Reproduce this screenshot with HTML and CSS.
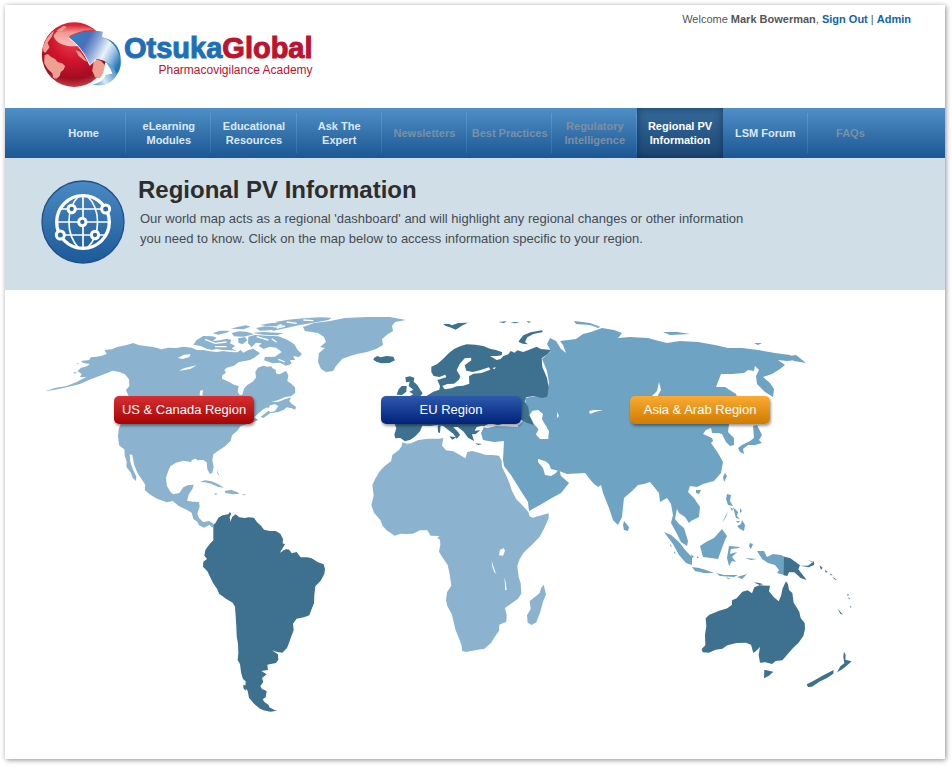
FILE: index.html
```
<!DOCTYPE html>
<html lang="en">
<head>
<meta charset="utf-8">
<title>Regional PV Information</title>
<link rel="stylesheet" href="styles.css">
</head>
<body>
<div class="page">
  <header class="header">
    <a class="brand" href="#">
      <svg class="brand-mark" viewBox="120 60 248 210" aria-hidden="true">
        <defs>
          <radialGradient id="ball" cx="0.48" cy="0.25" r="0.78">
            <stop offset="0" stop-color="#ed4050"/><stop offset="0.45" stop-color="#cf142d"/><stop offset="0.8" stop-color="#a10d22"/><stop offset="1" stop-color="#cb4a52"/>
          </radialGradient>
          <linearGradient id="gloss" x1="0" y1="0" x2="0" y2="1">
            <stop offset="0" stop-color="#d92636"/><stop offset="0.35" stop-color="#f29a92"/><stop offset="1" stop-color="#fbd8cd" stop-opacity="0.85"/>
          </linearGradient>
          <linearGradient id="arrow" x1="215" y1="100" x2="362" y2="180" gradientUnits="userSpaceOnUse">
            <stop offset="0" stop-color="#2b86c6"/><stop offset="0.3" stop-color="#4a70b8"/><stop offset="0.48" stop-color="#8ba9d8"/><stop offset="0.68" stop-color="#eaf2fb"/><stop offset="0.82" stop-color="#9cc3e5"/><stop offset="1" stop-color="#2478bc"/>
          </linearGradient>
          <linearGradient id="tail" x1="270" y1="240" x2="362" y2="190" gradientUnits="userSpaceOnUse">
            <stop offset="0" stop-color="#4b94cb"/><stop offset="0.35" stop-color="#d4e7f6"/><stop offset="0.65" stop-color="#6ea9d8"/><stop offset="1" stop-color="#2176ba"/>
          </linearGradient>
        </defs>
        <path fill="url(#tail)" d="M300 112C345 116 366 150 361 192C356 235 322 266 276 253C300 249 314 236 316 224L336 221C330 200 318 186 300 178Z"/>
        <circle cx="222" cy="164" r="97" fill="url(#ball)"/>
        <path fill="url(#gloss)" d="M160 108C172 76 250 62 285 92C262 88 235 94 207 108C214 122 224 130 236 138C205 142 168 134 160 108Z"/>
        <g fill="#eea091">
          <path d="M133 166L143 162L152 170L166 178L172 186L186 190L195 198L190 209L182 216L178 229L168 236L160 234L156 220L142 206L132 190Z"/>
          <path d="M282 176L302 182L315 196L312 212L300 236L285 232L276 212Z"/>
          <path d="M128 140L138 118L154 98L162 92L155 110L142 128L148 142L136 158L130 155ZM168 92L190 78L200 80L184 94Z"/>
          <path d="M226 150L240 156L252 172L262 186L250 180L236 168Z"/>
        </g>
        <path fill="none" stroke="#fff" stroke-width="5" d="M318 190C318 222 302 243 272 253"/>
        <path fill="url(#arrow)" d="M206 113C240 93 275 89 308 95L306 111C340 121 365 160 361 198C359 208 355 216 350 222C340 196 318 180 288 177L269 195C253 157 232 132 206 113Z"/>
        <path fill="none" stroke="#fff" stroke-width="3" d="M206 114C234 134 253 159 269 196L288 178"/>
        <path fill="#fff" d="M316 188L321 208L338 220L308 226Z"/>
      </svg>
      <span class="brand-text">
        <span class="brand-name"><span class="brand-first">Otsuka</span><span class="brand-second">Global</span></span>
        <span class="brand-sub">Pharmacovigilance Academy</span>
      </span>
    </a>
    <p class="account">Welcome <strong>Mark Bowerman</strong>, <a href="#">Sign Out</a> | <a href="#">Admin</a></p>
  </header>

  <nav class="nav" aria-label="Main">
    <a href="#">Home</a>
    <a href="#">eLearning<br>Modules</a>
    <a href="#">Educational<br>Resources</a>
    <a href="#">Ask The<br>Expert</a>
    <a class="muted" href="#">Newsletters</a>
    <a class="muted" href="#">Best Practices</a>
    <a class="muted" href="#">Regulatory<br>Intelligence</a>
    <a class="current" href="#" aria-current="page">Regional PV<br>Information</a>
    <a href="#">LSM Forum</a>
    <a class="muted" href="#">FAQs</a>
  </nav>

  <section class="intro">
    <svg class="intro-icon" viewBox="123 241 252 252" aria-hidden="true">
      <defs>
        <linearGradient id="disc" x1="0" y1="0" x2="0" y2="1">
          <stop offset="0" stop-color="#4a8ac4"/><stop offset="1" stop-color="#1d5a98"/>
        </linearGradient>
      </defs>
      <circle cx="249" cy="367" r="123" fill="url(#disc)" stroke="#204f8b" stroke-width="4"/>
      <g fill="none" stroke="#fff">
        <circle cx="249" cy="367" r="79" stroke-width="10"/>
        <path stroke-width="5" d="M249 287V447M169 367H329M181 328H317M181 406H317M236 289C197 330 197 404 236 445M262 289C303 330 303 404 262 445"/>
      </g>
      <g fill="#2c69a7" stroke="#fff" stroke-width="9">
        <circle cx="215" cy="328" r="11"/><circle cx="317" cy="328" r="12"/><circle cx="247" cy="367" r="11"/><circle cx="181" cy="406" r="12"/><circle cx="285" cy="406" r="11"/>
      </g>
    </svg>
    <div class="intro-text">
      <h1>Regional PV Information</h1>
      <p>Our world map acts as a regional 'dashboard' and will highlight any regional changes or other information you need to know. Click on the map below to access information specific to your region.</p>
    </div>
  </section>

  <main class="map">
    <svg class="world" viewBox="5 290 940 469" role="img" aria-label="World map">
      <!-- North America -->
      <g class="light" transform="translate(30 300) scale(.33333)">
        <path d="M45 274L75 264L110 258L140 246L158 236L170 232L150 231L155 222L143 214L152 204L170 199L180 192L160 189L152 183L178 180L182 172L200 170L216 167L230 162L224 150L245 148L262 141L290 135L310 129L325 135L345 138L370 141L395 148L415 143L440 144L460 140L485 143L500 150L520 150L535 153L560 156L580 153L600 156L622 157L632 150L640 158L655 150L670 146L690 160L675 172L660 180L640 184L625 187L612 197L590 203L583 210L588 218L576 226L576 236L598 246L612 254L626 258L623 275L629 285L637 284L642 266L652 255L668 245L678 233L676 216L684 203L700 197L712 200L724 199L730 210L735 213L742 224L750 222L768 213L775 226L772 243L782 250L795 262L796 278L783 289L765 291L745 300L725 306L745 305L765 298L783 292L778 302L785 312L798 320L796 329L785 325L770 322L762 329L745 336L720 340L700 354L692 350L715 333L712 322L700 328L672 352L685 360L665 368L645 374L632 378L622 392L606 406L602 422L585 439L565 452L550 463L547 480L551 500L547 518L540 522L532 508L530 487L520 480L502 481L498 476L487 479L482 486L460 482L438 488L421 499L414 515L408 534L411 558L421 575L430 583L448 579L460 562L475 555L491 554L487 568L477 581L471 602L490 605L507 606L509 620L502 641L507 655L520 666L538 663L551 671L548 683L538 675L522 683L506 675L503 666L490 657L485 638L471 630L445 617L428 603L410 607L383 597L363 586L344 570L346 555L335 538L322 518L312 493L307 465L299 463L301 485L308 506L319 530L318 543L308 534L303 519L289 500L290 485L284 466L283 448L267 436L264 408L266 388L273 370L285 318L297 291L288 270L298 258L297 238L285 223L268 216L248 212L230 220L208 228L182 238L150 252L110 262L75 269Z"/>
        <path d="M307 228L315 232L309 248L315 260L309 264L303 250ZM490 134L500 120L520 108L548 109L560 114L548 123L570 121L590 116L604 120L600 130L615 137L605 146L620 152L600 151L578 150L560 147L545 150L530 146L512 138ZM548 100L570 92L600 92L590 98L565 104ZM605 99L628 94L650 95L672 103L640 110L612 109ZM603 86L625 80L648 76L662 80L640 88ZM625 115L645 111L652 121L638 133L625 128ZM655 110L675 105L710 107L745 109L772 119L793 133L803 150L816 162L807 171L790 168L795 180L780 180L785 191L768 197L750 188L728 190L702 181L705 171L735 170L755 156L738 143L720 140L701 147L686 138L695 130L678 128L665 142L654 130ZM668 99L700 96L740 98L760 100L740 106L700 104ZM678 84L705 79L735 81L720 91L690 92ZM690 75L725 69L755 69L740 79L710 78ZM735 66L775 59L820 55L870 52L905 53L895 60L850 68L805 76L770 84L730 92L718 88L760 76ZM708 206L724 203L738 210L735 221L750 223L740 228L722 221Z"/>
        <path d="M509 546L525 541L545 544L565 553L582 563L565 561L543 551L525 547ZM584 573L603 569L622 577L629 581L608 583L586 579ZM552 580L564 581L556 585ZM636 582L650 584L640 586ZM560 508L565 520L569 527L563 522ZM130 216L142 218L134 221ZM140 189L148 191L143 193Z"/>
        <path class="water" d="M443 174L462 164L482 163L478 171L458 177ZM447 212L462 205L480 200L500 196L481 207L459 211ZM510 272L519 270L517 287L509 286ZM712 330L720 316L735 313L745 318L735 333L722 337Z"/>
        <path fill="none" stroke="#fff" stroke-width="4" d="M525 118L555 130L590 126M690 150L720 162L748 151M555 140L590 140M725 116L740 127M680 110L715 120M745 178L765 186M770 66L800 70M740 84L765 78M820 60L850 62"/>
      </g>

      <!-- Greenland -->
      <path class="light" d="M303 327L314 323L330 321L345 318L367 317L390 317L406 320L395 322L392 326L393 331L388 334L382 339L383 345L376 349L367 352L357 354L350 356L342 359L336 366L333 371L326 372L321 369L318 362L319 353L325 348L320 347L326 342L324 337L318 333L305 331Z"/>

      <!-- South America -->
      <g class="dark" transform="translate(180 490) scale(.33333)">
        <path d="M100 105L107 98L115 83L128 76L145 73L150 66L154 72L149 81L151 95L157 80L167 73L178 82L195 84L205 82L222 83L231 97L243 107L252 119L270 123L287 123L301 131L309 147L308 160L315 163L304 181L300 188L319 177L328 180L335 190L350 186L362 202L382 202L395 205L414 217L431 223L435 237L433 252L422 272L406 289L403 315L402 340L393 362L388 376L372 382L350 386L339 401L341 421L333 442L327 459L321 474L307 488L292 486L276 481L294 493L295 509L288 519L262 524L264 540L244 543L260 553L246 564L250 576L241 588L246 597L260 603L257 622L248 628L254 637L266 645L268 652L285 661L292 662L271 665L250 661L238 655L222 641L207 623L203 603L196 594L197 574L189 567L183 546L180 522L173 511L175 489L174 462L170 438L169 410L167 378L165 350L158 338L139 327L118 312L111 296L99 279L90 260L82 244L69 230L70 215L81 207L73 197L76 180L89 162L100 151Z"/>
        <path d="M307 182L327 179L325 188L310 189ZM190 584L199 587L197 602L190 595ZM185 550L191 548L192 560L187 561Z"/>
      </g>

      <!-- Africa -->
      <g class="light" transform="translate(350 420) scale(.33333)">
        <path d="M157 67L170 71L183 70L205 60L235 56L268 56L280 54L276 77L288 91L310 94L330 105L346 115L352 96L367 93L389 99L408 105L428 105L447 107L455 122L456 141L468 165L478 188L486 213L499 238L517 256L535 276L539 289L548 293L574 286L596 280L596 295L582 326L569 350L546 374L522 397L509 417L502 438L506 471L512 490L514 521L503 537L485 550L465 564L470 585L469 605L448 614L447 632L434 651L423 669L403 686L380 690L348 696L336 692L335 678L329 660L317 631L311 607L306 584L292 558L288 541L291 517L304 497L299 463L293 435L277 412L267 395L271 374L270 359L262 355L268 348L242 347L232 331L210 331L189 341L170 342L152 341L134 347L110 331L98 318L91 300L72 278L64 256L71 227L67 195L75 178L88 155L104 138L123 124L127 105L147 90L155 78Z"/>
        <path d="M581 494L588 523L579 545L571 575L559 607L545 615L533 608L531 586L542 567L539 543L551 534L569 519L574 503Z"/>
        <path class="water" d="M450 389L461 385L465 392L459 407L447 406ZM425 421L429 436L436 456L440 463L433 457L427 440ZM463 472L467 487L470 510L465 511L465 493Z"/>
      </g>

      <!-- Asia -->
      <g class="mid">
        <path d="M551 351L547 344L550 338L556 341L561 349L566 353L563 345L560 341L568 340L576 339L583 334L591 332L602 328L614 330L622 333L618 338L630 337L648 338L655 340L667 343L680 341L698 342L715 345L728 348L742 348L758 350L775 353L790 355L796 360L787 361L778 360L785 365L780 369L772 374L763 377L770 383L774 389L773 397L765 392L757 384L756 376L759 370L755 366L754 371L748 370L744 373L732 374L721 374L716 387L725 387L736 394L739 402L741 415L739 423L729 424L728 432L734 438L734 445L730 446L726 442L722 434L718 433L712 433L711 428L706 430L703 434L712 438L713 441L711 443L718 453L723 462L721 473L714 481L703 484L697 487L690 486L688 492L694 498L700 507L699 517L691 521L689 523L685 517L679 513L677 509L675 519L679 524L684 528L688 541L687 546L681 542L676 532L671 523L673 515L671 504L667 498L660 502L659 493L650 482L644 484L638 485L632 491L624 498L623 507L622 517L618 525L613 520L609 508L603 493L601 485L598 487L593 483L585 473L567 474L559 471L551 469L549 464L545 461L538 459L538 462L543 468L545 475L551 476L556 473L559 469L561 476L569 483L561 493L550 499L540 505L529 511L528 502L519 488L511 475L504 466L503 460L504 441L494 442L483 440L481 433L484 427L493 425L510 425L519 425L523 421L519 415L526 405L525 398L536 396L546 397L549 383L547 371L542 359Z"/>
        <path d="M574 321L590 323L601 327L590 325L576 324ZM590 325L600 327L598 328ZM663 332L677 332L690 334L670 335ZM754 343L762 343L758 345ZM789 356L796 355L806 363L794 361ZM753 426L757 425L762 435L759 440L762 443L755 445L748 445L743 449L744 454L740 452L738 448L742 445L750 441L754 438ZM624 521L629 527L628 531L624 530L623 525ZM696 490L701 490L699 494L696 493ZM725 473L727 476L724 482L723 477ZM727 494L731 495L730 501L733 506L728 505L726 499ZM733 507L738 512L737 516L740 519L736 518ZM742 520L745 525L744 531L740 529L737 526L741 524ZM728 511L726 517L722 523L726 515ZM730 507L733 509L732 511ZM740 508L742 511L740 513ZM736 521L740 521L738 523ZM722 529L727 536L725 540L722 548L718 559L711 558L703 557L700 546L706 542L714 538ZM664 532L671 535L679 542L686 551L692 557L692 565L686 563L679 555L673 544ZM670 544L672 547L670 546ZM674 551L676 554L674 553ZM691 554L694 557L692 558ZM697 556L699 558L697 558ZM692 567L699 568L706 570L714 573L704 573L695 571ZM716 573L724 575L738 575L734 577L720 576ZM737 577L747 574L742 579ZM726 577L731 579L728 579ZM729 546L740 547L743 544L739 548L731 549L730 554L737 552L732 557L736 562L732 561L729 566L727 558ZM750 543L753 544L751 549L749 546ZM745 558L757 559L751 560ZM757 551L764 551L767 557L773 554L781 555L785 557L784 575L777 573L779 570L775 565L768 563L762 559Z"/>
        <path class="water" d="M659 382L661 390L657 397L651 397L657 391ZM532 415L538 410L543 414L542 419L546 427L549 431L548 439L540 439L536 434L539 429L534 423ZM557 412L559 416L557 418ZM589 411L594 410L603 410L595 412L590 414Z"/>
      </g>

      <!-- Europe -->
      <g class="dark" transform="translate(350 300) scale(.33333)">
        <path d="M244 200L262 192L279 177L296 160L312 147L332 138L350 133L376 134L400 138L420 146L440 151L457 157L455 166L440 168L420 168L440 180L452 177L460 168L475 163L482 153L494 158L502 151L520 156L545 146L560 140L572 147L604 150L592 163L575 175L577 201L591 234L596 261L592 290L575 294L553 288L528 292L524 304L535 322L537 340L551 375L530 368L510 358L488 372L462 378L430 380L395 377L380 381L374 392L391 391L377 402L366 403L372 423L354 413L341 395L323 381L310 382L325 397L330 405L320 416L310 401L292 388L280 378L263 375L240 378L217 377L210 394L196 409L181 419L165 424L151 414L136 415L133 404L139 384L134 373L160 370L200 372L200 315L233 286L250 275L268 269L270 258L262 240L279 235L289 232L286 224L268 231L251 228L244 216Z"/>
        <path d="M166 232L180 229L193 233L191 245L202 255L211 270L218 280L208 292L174 292L190 283L178 275L190 269L176 258L179 245L168 247ZM155 258L170 258L169 275L156 285L140 284L146 268ZM72 174L82 168L92 172L110 168L130 170L135 181L118 189L94 190L79 185L70 179ZM280 72L298 72L306 76L325 69L354 68L338 76L317 89L300 82L287 78ZM445 66L470 64L462 69ZM480 67L510 66L495 70ZM530 64L545 65L535 68ZM508 121L520 106L542 97L575 91L579 96L550 102L532 112L525 126L534 133L518 131L506 126ZM263 377L272 374L270 399L264 397ZM298 409L319 412L307 419ZM375 430L396 432L385 435Z"/>
        <path class="water" d="M329 192L344 175L363 173L364 181L344 196L349 212L368 216L390 211L417 202L421 209L394 219L370 221L357 229L358 251L340 257L320 259L304 265L284 268L277 258L292 252L312 251L327 239L331 229L320 211ZM427 204L438 202L433 208ZM538 345L548 332L563 330L575 341L567 350L577 362L591 382L595 416L571 416L559 405L566 388L552 372ZM398 380L421 369L443 376L460 371L488 370L503 370L504 380L468 379L438 379L410 384Z"/>
      </g>

      <!-- Australia and the Pacific -->
      <g class="dark" transform="translate(650 520) scale(.33333)">
        <path d="M408 184L414 193L417 210L427 219L431 248L438 259L448 276L452 294L464 309L465 327L460 348L445 369L429 384L414 401L397 421L377 423L366 432L346 427L330 428L326 405L330 381L318 393L310 399L303 374L288 368L260 369L232 376L217 386L197 389L176 398L158 397L155 387L166 376L165 345L169 318L167 295L178 284L208 272L232 265L246 254L246 241L260 235L277 215L293 211L306 220L313 202L328 196L360 197L357 214L371 231L386 244L393 228L398 205Z"/>
        <path d="M311 187L328 189L340 193L328 195ZM343 449L370 455L357 467L342 475ZM402 110L420 114L438 127L450 136L445 148L470 180L452 174L433 157L417 157L412 168L401 166ZM450 137L474 137L492 124L492 135L476 142ZM474 120L492 126L484 125ZM508 136L518 143L513 149ZM525 150L533 155L527 158ZM540 160L548 166L542 166ZM547 170L562 181L553 178ZM563 266L579 284L571 281ZM592 221L597 224L593 228ZM596 232L600 236L596 238ZM600 257L605 261L602 263ZM582 395L587 404L586 419L605 424L590 437L578 447L561 457L571 439L583 430L580 411ZM470 493L491 482L520 466L551 450L550 461L531 474L508 485L486 500L474 501Z"/>
      </g>
    </svg>
    <a class="marker marker-us" href="#">US &amp; Canada Region</a>
    <a class="marker marker-eu" href="#">EU Region</a>
    <a class="marker marker-asia" href="#">Asia &amp; Arab Region</a>
  </main>
</div>
</body>
</html>
```
FILE: styles.css
```
* {
  box-sizing: border-box;
}

body {
  margin: 0;
  padding: 5px 7px 8px 5px;
  background: #fff;
  color: #555;
  font-family: "Liberation Sans", Arial, Helvetica, sans-serif;
  font-size: 11px;
}

a {
  text-decoration: none;
}

.page {
  background: #fff;
  box-shadow: 1px 1px 5px rgba(0, 0, 0, 0.45);
}

.header {
  display: flex;
  justify-content: space-between;
  align-items: flex-start;
  min-height: 103px;
  padding: 0 34px 0 35px;
}

.brand {
  display: flex;
  align-items: flex-start;
  padding-top: 15px;
}

.brand-mark {
  width: 83px;
  height: 70px;
}

.brand-text {
  display: flex;
  flex-direction: column;
  align-items: flex-end;
  padding: 12px 0 0 1px;
}

.brand-name {
  font-size: 29px;
  font-weight: bold;
  line-height: 32px;
  -webkit-text-stroke: 1px;
}

.brand-first {
  color: #1e6fb8;
}

.brand-second {
  color: #bd1230;
}

.brand-sub {
  color: #bd1230;
  font-size: 12px;
  line-height: 12px;
}

.account {
  margin: 0;
  padding-top: 7px;
  line-height: 14px;
}

.account a {
  color: #1263ad;
  font-weight: bold;
}

.nav {
  display: flex;
  height: 50px;
  padding: 0 52px 0 36px;
  background: linear-gradient(#4f8fc7, #1c5793);
}

.nav a {
  display: flex;
  flex: 1 1 0;
  align-items: center;
  justify-content: center;
  color: #dce9f5;
  font-weight: bold;
  line-height: 14px;
  text-align: center;
  white-space: nowrap;
  background: linear-gradient(#5f9bd0, #2f6dab) no-repeat right / 1px 40px;
}

.nav a.muted {
  color: #7d8fa3;
}

.nav a.current {
  color: #fff;
  background: linear-gradient(#366a9c, #1b4672);
  box-shadow: inset 0 0 8px rgba(10, 35, 65, 0.6);
}

.nav a:last-child {
  background: none;
}

.intro {
  display: flex;
  gap: 13px;
  min-height: 132px;
  padding: 19px 36px 24px;
  background: #d0dee7;
}

.intro-icon {
  flex: none;
  width: 84px;
  height: 84px;
  margin-top: 3px;
}

h1 {
  margin: 0;
  color: #2d2d2d;
  font-size: 24px;
  line-height: 26px;
}

.intro-text p {
  max-width: 616px;
  margin: 6px 0 0 2px;
  color: #444c52;
  font-size: 13px;
  line-height: 20px;
}

.map {
  position: relative;
}

.world {
  display: block;
  width: 100%;
  height: auto;
}

.light {
  fill: #8bb3cf;
}

.mid {
  fill: #6ea3c3;
}

.dark {
  fill: #3d718f;
}

.water {
  fill: #fff;
}

.marker {
  position: absolute;
  top: 22.6%;
  width: 140px;
  border-radius: 5px;
  color: #fff;
  font-size: 13px;
  line-height: 28px;
  text-align: center;
  box-shadow: 1px 2px 3px rgba(0, 0, 0, 0.4);
}

.marker-us {
  left: 11.6%;
  background: linear-gradient(#d72f31, #a80304);
}

.marker-eu {
  left: 40%;
  background: linear-gradient(#2d59ae, #01227a);
}

.marker-asia {
  left: 66.5%;
  background: linear-gradient(#faab32, #d07b02);
}
```
